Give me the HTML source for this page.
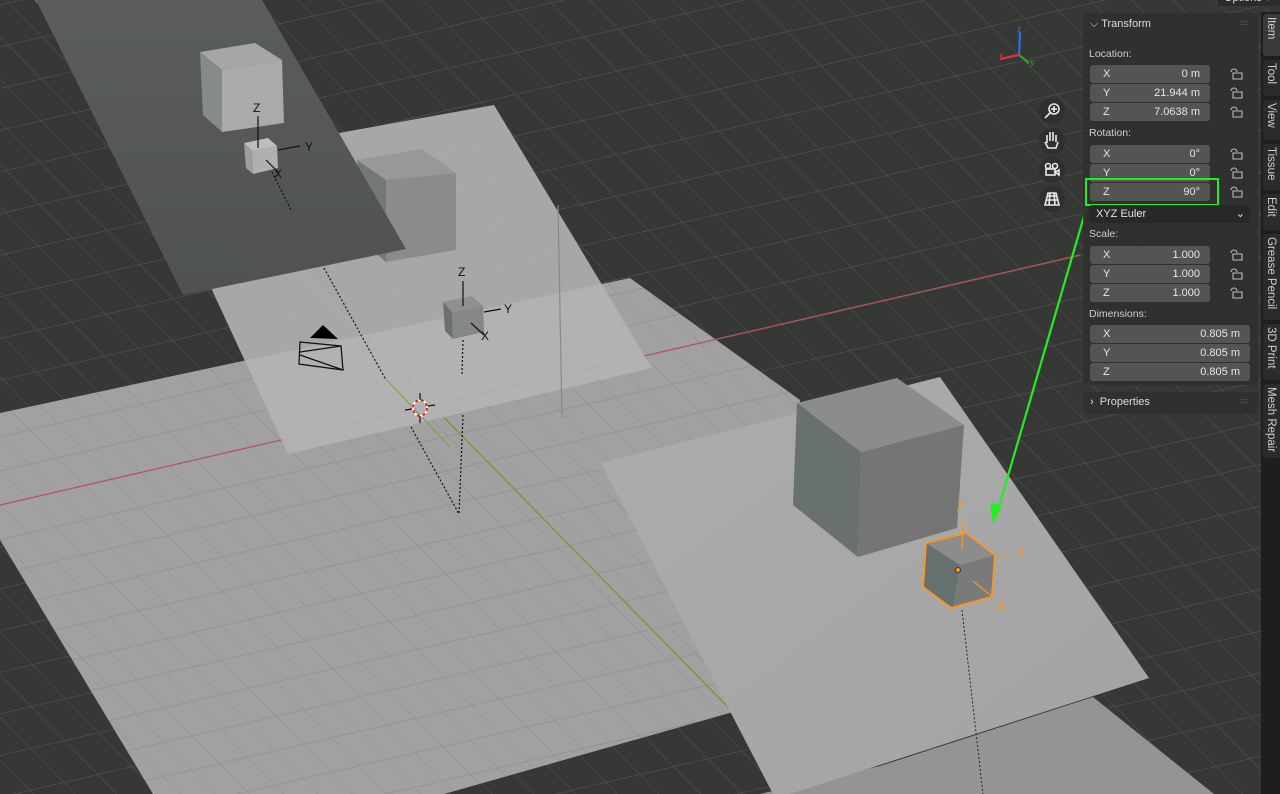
<!DOCTYPE html>
<html><head><meta charset="utf-8"><style>
body{margin:0;width:1280px;height:794px;overflow:hidden;background:#353835;font-family:"Liberation Sans",sans-serif}
svg{position:absolute;left:0;top:0}
.p{position:absolute;left:1083px;width:175px;background:rgba(48,48,48,0.94);border-radius:4px}
.lbl{position:absolute;left:1089px;font-size:10.5px;color:#cfcfcf}
.f{position:absolute;left:1090px;width:120px;height:18px;background:#545454;border-radius:3px;font-size:11px;color:#e6e6e6;line-height:18px}
.f .a{position:absolute;left:13px}.f .v{position:absolute;right:10px}
.w{width:160px}
.tab{position:absolute;left:1263px;width:17px;background:#2b2b2b;border-radius:3px 0 0 3px;color:#d0d0d0;font-size:11.5px}
.tab span{position:absolute;left:2px;top:3px;writing-mode:vertical-rl;white-space:nowrap}
</style></head><body>
<svg width="1280" height="794" viewBox="0 0 1280 794">
<defs>
<pattern id="g" width="34" height="34" patternUnits="userSpaceOnUse" patternTransform="matrix(1,-0.231,0.98,1,0,505)">
<path d="M0 0H34M0 0V34" stroke="#4e514e" stroke-width="1.3" fill="none"/></pattern>
<pattern id="g2" width="28" height="28" patternUnits="userSpaceOnUse" patternTransform="matrix(1,-0.231,0.98,1,0,505)">
<path d="M0 0H28M0 0V28" stroke="#8c8c8c" stroke-width="1.1" fill="none"/></pattern>
<linearGradient id="dk" x1="0" y1="0" x2="0" y2="1"><stop offset="0" stop-color="#5a5d5c"/><stop offset="1" stop-color="#4f5251"/></linearGradient>
<linearGradient id="rp" x1="0" y1="0" x2="1" y2="1"><stop offset="0" stop-color="#acacac"/><stop offset="1" stop-color="#a3a3a3"/></linearGradient>
</defs>
<rect width="1280" height="794" fill="#353835"/>
<rect width="1280" height="794" fill="url(#g)"/>
<polygon points="0,413 630,278 800,400 786,697 444,794 153,794 0,540" fill="#a0a1a0"/>
<polygon points="0,413 630,278 800,400 786,697 444,794 153,794 0,540" fill="url(#g2)"/>
<polygon points="880,766 1093,697 1214,794 760,794" fill="#939493"/>
<line x1="0" y1="505" x2="1080" y2="255" stroke="#b8525a" stroke-width="1.2"/>
<line x1="35" y1="0" x2="770" y2="750" stroke="#6f9a2c" stroke-width="1.2"/>
<polygon points="300,140 494,105 652,368 288,454 212,290" fill="#b4b4b4" opacity="0.9"/>
<line x1="385" y1="378" x2="450" y2="447" stroke="#7fa040" stroke-width="1"/>
<polygon points="357,160 422,149 456,173 386,180" fill="#979999"/>
<polygon points="386,180 456,173 456,250 386,262" fill="#8b8b8b"/>
<polygon points="357,160 386,180 386,262 372,250" fill="#737877"/>
<polygon points="36,0 262,0 406,249 183,295" fill="url(#dk)"/>
<polygon points="200,52 255,43 282,60 222,70" fill="#a5a7a6"/>
<polygon points="200,52 222,70 222,132 203,115" fill="#858b89"/>
<polygon points="222,70 282,60 284,123 222,132" fill="#a9aaa9"/>
<polygon points="244,143 268,138 277,146 252,151" fill="#bdbdbd"/>
<polygon points="244,143 252,151 253,174 246,168" fill="#9a9e9d"/>
<polygon points="252,151 277,146 278,168 253,174" fill="#b0b0b0"/>
<g stroke="#111" stroke-width="1.2" fill="none"><line x1="258" y1="148" x2="258" y2="116"/><line x1="278" y1="150" x2="300" y2="146"/><line x1="266" y1="160" x2="278" y2="172"/><line x1="272" y1="172" x2="291" y2="210" stroke-dasharray="2 2"/></g>
<text x="253" y="112" font-size="12" fill="#111">Z</text><text x="305" y="151" font-size="12" fill="#111">Y</text><text x="274" y="178" font-size="12" fill="#111">X</text>
<polygon points="443,302 472,296 483,306 452,312" fill="#8e9190"/>
<polygon points="443,302 452,312 453,339 445,331" fill="#6b7170"/>
<polygon points="452,312 483,306 484,332 453,339" fill="#868787"/>
<g stroke="#111" stroke-width="1.2" fill="none"><line x1="463" y1="306" x2="463" y2="281"/><line x1="484" y1="312" x2="501" y2="309"/><line x1="471" y1="323" x2="484" y2="335"/><line x1="463" y1="340" x2="462" y2="375" stroke-dasharray="2 2"/><line x1="324" y1="268" x2="386" y2="380" stroke-dasharray="2 2"/><line x1="558" y1="205" x2="562" y2="418" stroke="#888"/><line x1="411" y1="427" x2="459" y2="514" stroke-dasharray="2 2"/><line x1="463" y1="415" x2="459" y2="514" stroke-dasharray="2 2"/></g>
<text x="458" y="276" font-size="12" fill="#111">Z</text><text x="504" y="313" font-size="12" fill="#111">Y</text><text x="481" y="340" font-size="12" fill="#111">X</text>
<polygon points="310,338 323,325 338,339" fill="#000"/>
<polygon points="300,342 341,346 343,370 299,364" fill="none" stroke="#111" stroke-width="1.3"/>
<path d="M300,352 L341,346 M300,355 L343,370" stroke="#111" stroke-width="1.3" fill="none"/>
<circle cx="561" cy="193" r="10" fill="none" stroke="#333" stroke-dasharray="2 2" stroke-width="1.3"/><circle cx="561" cy="193" r="5" fill="none" stroke="#333" stroke-width="1.2"/><circle cx="561" cy="193" r="2" fill="#333"/>
<ellipse cx="420" cy="408" rx="7" ry="8" fill="none" stroke="#fff" stroke-width="2"/><ellipse cx="420" cy="408" rx="7" ry="8" fill="none" stroke="#d22" stroke-width="2" stroke-dasharray="3 3"/>
<g stroke="#111" stroke-width="1.2"><line x1="420" y1="393" x2="420" y2="400"/><line x1="420" y1="416" x2="420" y2="423"/><line x1="405" y1="410" x2="412" y2="409"/><line x1="428" y1="406" x2="435" y2="405"/></g>
<polygon points="601,463 940,377 1149,678 790,794 773,794" fill="url(#rp)"/>
<polygon points="797,403 897,378 964,425 861,452" fill="#8b8d8c"/>
<polygon points="797,403 861,452 858,557 793,505" fill="#687170"/>
<polygon points="861,452 964,425 957,528 858,557" fill="#757575"/>
<polygon points="926,543 966,533 995,555 960,565" fill="#8b8d8c"/>
<polygon points="926,543 960,565 953,608 923,587" fill="#66706e"/>
<polygon points="960,565 995,555 992,597 953,608" fill="#7a7a7a"/>
<polygon points="926,543 966,533 995,555 992,597 951,608 923,587" fill="none" stroke="#f5962a" stroke-width="2"/>
<g stroke="#f5962a" stroke-width="1.2"><line x1="962" y1="549" x2="963" y2="520"/><line x1="995" y1="556" x2="1010" y2="555"/><line x1="973" y1="581" x2="994" y2="598"/></g>
<circle cx="958" cy="570" r="2.5" fill="#f5962a" stroke="#222" stroke-width="0.8"/>
<text x="957" y="512" font-size="14" fill="#f5962a">Z</text><text x="1016" y="557" font-size="14" fill="#f5962a">Y</text><text x="997" y="611" font-size="14" fill="#f5962a">X</text>
<line x1="962" y1="610" x2="983" y2="794" stroke="#222" stroke-dasharray="2 2"/>
<line x1="1087" y1="206" x2="998" y2="510" stroke="#22ee22" stroke-width="2.2"/>
<polygon points="993,524 990,503 1002,506" fill="#22ee22"/>
<line x1="1019" y1="55" x2="1020" y2="32" stroke="#2f6fe0" stroke-width="2.2"/><text x="1017" y="32" font-size="9" fill="#2f6fe0">z</text>
<line x1="1019" y1="55" x2="1000" y2="59" stroke="#e0303a" stroke-width="2.2"/><text x="999" y="58" font-size="9" fill="#e0303a">x</text>
<line x1="1019" y1="55" x2="1029" y2="63" stroke="#3c9c2c" stroke-width="2.2"/><text x="1030" y="65" font-size="9" fill="#3c9c2c">y</text>
<g fill="#2d302d" opacity="0.9"><circle cx="1052" cy="111" r="13"/><circle cx="1052" cy="141" r="13"/><circle cx="1052" cy="170" r="13"/><circle cx="1052" cy="199" r="13"/></g>
<g stroke="#e8e8e8" fill="none" stroke-width="1.6">
<circle cx="1054" cy="109" r="5"/><line x1="1050" y1="113" x2="1045" y2="118"/><line x1="1054" y1="106" x2="1054" y2="112"/><line x1="1051" y1="109" x2="1057" y2="109"/>
<path d="M1047,143 v-8 M1050,141 v-9 M1053,141 v-9 M1056,142 v-7 M1045,142 l3,6 h8 l2,-6"/>
<circle cx="1048" cy="166" r="2.5"/><circle cx="1055" cy="166" r="2.5"/><rect x="1046" y="169" width="9" height="6"/><path d="M1055,172 l4,-2 v5 z"/>
<path d="M1045,205 l3,-12 h8 l3,12 z M1046,200 h12 M1047,196 h10 M1050,193 l-1,12 M1054,193 l1,12"/>
</g>
</svg>
<div style="position:absolute;left:1218px;top:-8px;width:56px;height:14px;background:#2b2b2b;border-radius:3px;color:#ddd;font-size:11px;padding-left:6px;line-height:12px">Options ▾</div>
<div class="p" style="top:13px;height:372px"></div>
<div class="p" style="top:392px;height:22px"></div>
<div style="position:absolute;left:1090px;top:18px;color:#ddd;font-size:11px">⌵ Transform</div>
<div style="position:absolute;left:1090px;top:396px;color:#ddd;font-size:11px">›&nbsp; Properties</div>
<div style="position:absolute;left:1240px;top:20px;color:#888;font-size:7px">::::</div>
<div style="position:absolute;left:1240px;top:398px;color:#888;font-size:7px">::::</div>
<div class="lbl" style="top:48px">Location:</div>
<div class="f" style="top:65px"><span class="a">X</span><span class="v">0 m</span></div>
<div class="f" style="top:84px"><span class="a">Y</span><span class="v">21.944 m</span></div>
<div class="f" style="top:103px"><span class="a">Z</span><span class="v">7.0638 m</span></div>
<div class="lbl" style="top:127px">Rotation:</div>
<div class="f" style="top:145px"><span class="a">X</span><span class="v">0°</span></div>
<div class="f" style="top:164px"><span class="a">Y</span><span class="v">0°</span></div>
<div class="f" style="top:183px"><span class="a">Z</span><span class="v">90°</span></div>
<div style="position:absolute;left:1085px;top:178px;width:130px;height:24px;border:2px solid #22ee22"></div>
<div style="position:absolute;left:1089px;top:205px;width:161px;height:18px;background:#282828;border-radius:3px;color:#e6e6e6;font-size:11px;line-height:18px"><span style="margin-left:7px">XYZ Euler</span><span style="position:absolute;right:5px">⌄</span></div>
<div class="lbl" style="top:228px">Scale:</div>
<div class="f" style="top:246px"><span class="a">X</span><span class="v">1.000</span></div>
<div class="f" style="top:265px"><span class="a">Y</span><span class="v">1.000</span></div>
<div class="f" style="top:284px"><span class="a">Z</span><span class="v">1.000</span></div>
<div class="lbl" style="top:308px">Dimensions:</div>
<div class="f w" style="top:325px"><span class="a">X</span><span class="v">0.805 m</span></div>
<div class="f w" style="top:344px"><span class="a">Y</span><span class="v">0.805 m</span></div>
<div class="f w" style="top:363px"><span class="a">Z</span><span class="v">0.805 m</span></div>
<svg width="1280" height="794" style="pointer-events:none"><g stroke="#bbb" fill="none" stroke-width="1.1">
<path d="M1231,72 a3,3 0 0 1 6,0 M1233,73 h9 v6 h-9 z"/><path d="M1231,91 a3,3 0 0 1 6,0 M1233,92 h9 v6 h-9 z"/><path d="M1231,110 a3,3 0 0 1 6,0 M1233,111 h9 v6 h-9 z"/>
<path d="M1231,152 a3,3 0 0 1 6,0 M1233,153 h9 v6 h-9 z"/><path d="M1231,171 a3,3 0 0 1 6,0 M1233,172 h9 v6 h-9 z"/><path d="M1231,190 a3,3 0 0 1 6,0 M1233,191 h9 v6 h-9 z"/>
<path d="M1231,253 a3,3 0 0 1 6,0 M1233,254 h9 v6 h-9 z"/><path d="M1231,272 a3,3 0 0 1 6,0 M1233,273 h9 v6 h-9 z"/><path d="M1231,291 a3,3 0 0 1 6,0 M1233,292 h9 v6 h-9 z"/>
</g></svg>
<div style="position:absolute;left:1261px;top:12px;width:19px;height:782px;background:#1e1e1e"></div>
<div class="tab" style="top:14px;height:42px;background:#3a3a3a"><span>Item</span></div>
<div class="tab" style="top:60px;height:36px"><span>Tool</span></div>
<div class="tab" style="top:100px;height:40px"><span>View</span></div>
<div class="tab" style="top:144px;height:46px"><span>Tissue</span></div>
<div class="tab" style="top:194px;height:36px"><span>Edit</span></div>
<div class="tab" style="top:234px;height:86px"><span>Grease Pencil</span></div>
<div class="tab" style="top:324px;height:56px"><span>3D Print</span></div>
<div class="tab" style="top:384px;height:74px"><span>Mesh Repair</span></div>
</body></html>
